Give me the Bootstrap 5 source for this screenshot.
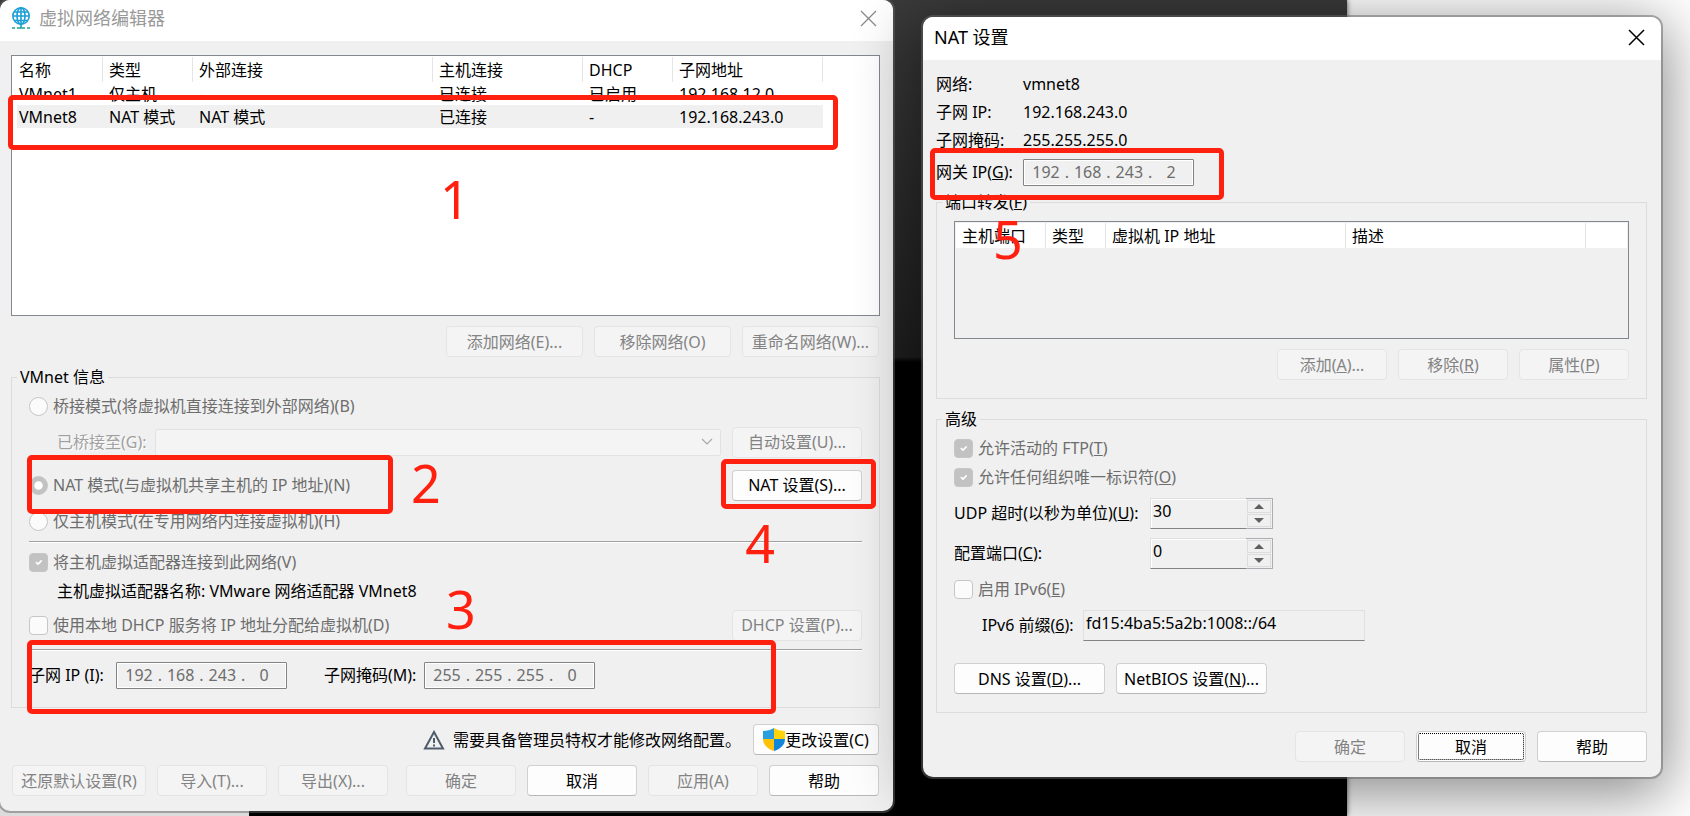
<!DOCTYPE html>
<html lang="zh-CN">
<head>
<meta charset="utf-8">
<meta name="viewport" content="width=device-width, initial-scale=1">
<title>虚拟网络编辑器</title>
<link href="https://cdn.jsdelivr.net/npm/bootstrap@5.3.0/dist/css/bootstrap.min.css" rel="stylesheet">
<style>
  body { font: 16px/24px "Noto Sans", "Noto Sans CJK SC", sans-serif; color: #000; background: #fff; }
  .desktop { display: grid; grid-template-columns: 893fr 30fr 738fr 29fr; align-items: start; min-height: 100vh; overflow: hidden; }
  .wallpaper { inset: 0 20.3% 0 0; background: linear-gradient(to right, #dcdcdc 249px, transparent 249px) bottom / 100% 30px no-repeat, linear-gradient(#3a3a3a, #1e1e1e 357px, #000 362px); box-shadow: 0 0 5px #555; }

  /* Windows */
  .win { background: #f0f0f0; border-radius: 10px; min-width: 0; position: relative; box-shadow: 0 0 0 2px rgba(100,100,100,.5); }
  .win-nat { grid-column: 3; margin-top: 17px; box-shadow: 0 0 0 2px rgba(100,100,100,.5), 0 12px 60px 6px rgba(0,0,0,.46); }
  .win-title { background: #fff; border-radius: 10px 10px 0 0; font-size: 18px; }
  .win-title h1 { font-size: 18px; line-height: 24px; font-weight: 400; margin: 0; }
  .win-close { border: 0; background: none; padding: 0; line-height: 0; }
  .win-editor .win-title { height: 41px; padding: 0 16px 5px 11px; color: #999; }
  .win-nat .win-title { height: 43px; padding: 0 16px 3px 11px; }
  .win-editor .win-body { padding: 14px 13px 15px 11px; }
  .win-nat .win-body { padding: 10px 14px 15px 13px; }

  /* Lists */
  .listbox { border: 1px solid #828790; background: #fff; padding: 1px; position: relative; }
  .listbox-main { height: 261px; }
  .listbox-ports { height: 118px; background: #f0f0f0; margin-top: 7px; }
  .listbox table { table-layout: fixed; width: 100%; border-collapse: separate; border-spacing: 0; }
  .listbox th { font-weight: 400; height: 25px; padding: 0 6px; border-right: 1px solid #e5e5e5; background: #fff; white-space: nowrap; }
  .listbox th:last-child { border-right: 0; }
  .listbox td { height: 23px; line-height: 22px; padding: 1px 6px 0; white-space: nowrap; }
  .listbox tr.chosen td { background: #f0f0f0; }
  .listbox tr.chosen td:first-child { box-shadow: inset 4px 0 #fff; }
  .listbox tr.chosen td:last-child { background: #fff; }
  .col-s { width: 90px; } .col-xs { width: 60px; } .col-m { width: 150px; } .col-l { width: 240px; }

  /* Buttons */
  .btn-win { font: inherit; line-height: 24px; height: 31px; min-width: 110px; padding: 0 6px; border: 1px solid #d0d0d0; border-bottom-color: #b8b8b8; border-radius: 4px; background: #fdfdfd; color: #000; white-space: nowrap; display: inline-flex; align-items: center; justify-content: center; }
  .btn-win:disabled { background: #f4f4f4; border-color: #e4e4e4; color: #838383; opacity: 1; }
  .btn-137 { width: 137px; } .btn-134 { width: 134px; } .btn-130 { width: 130px; } .btn-151 { width: 151px; } .btn-126 { width: 126px; }
  .btn-focus { outline: 1px dotted #000; outline-offset: -3px; }
  .gap-11 { gap: 11px; }
  .mt-10 { margin-top: 10px; }
  .mt-18 { margin-top: 18px; }
  .pb-18 { padding-bottom: 18px; }
  .px-17 { padding-left: 17px; padding-right: 17px; }
  .mx-1px { margin-left: 1px; margin-right: 1px; }
  .ms-37 { margin-left: 37px; }

  /* Group boxes */
  .group { border: 1px solid #dcdcdc; margin: 0; padding: 0; min-width: 0; }
  .group > legend { float: none; width: auto; font-size: 16px; line-height: 24px; margin: 0 0 0 5px; padding: 0 3px; }
  .line { display: flex; align-items: center; }
  .h-20 { min-height: 20px; line-height: 20px; } .h-24 { min-height: 24px; } .h-28 { min-height: 28px; } .h-32 { min-height: 32px; }
  .h-34 { min-height: 34px; } .h-36 { min-height: 36px; } .h-38 { min-height: 38px; } .h-40 { min-height: 40px; } .h-48 { min-height: 48px; }
  .rule { border-top: 1px solid #a0a0a0; border-bottom: 1px solid #fff; }
  .muted { color: #6d6d6d; }
  .etched { color: #a0a0a0; text-shadow: 1px 1px #fff; }

  .form-check-input.tick { width: 19px; height: 19px; margin: 0 5px 0 0; border: 1px solid #c6c6c6; background-color: #fbfbfb; opacity: 1; flex: none; }
  .form-check-input.tick[type=checkbox] { border-radius: 4px; }
  .form-check-input.tick:checked { background-color: #c2c2c2; background-size: 11px; }
  .form-check-input.tick[type=radio]:checked { background-size: 17px; }

  .combo { appearance: none; height: 27px; border: 1px solid #e2e2e2; border-radius: 2px; opacity: 1; min-width: 0;
    background: #f4f4f4 url("data:image/svg+xml,%3Csvg xmlns='http://www.w3.org/2000/svg' viewBox='0 0 12 8'%3E%3Cpath d='M1 1l5 5 5-5' fill='none' stroke='%23a8a8a8' stroke-width='1.2'/%3E%3C/svg%3E") no-repeat right 7px center / 12px 8px; }
  .ipbox { width: 171px; height: 27px; border: 1px solid #838383; box-shadow: inset 0 0 0 1px #fff; padding: 0 6px; color: #6d6d6d; flex: none; border-radius: 1px; }
  .ipbox input { width: 32px; border: 0; padding: 0; background: none; text-align: center; color: #6d6d6d; line-height: 22px; }
  .ipbox span { width: 10px; text-align: center; line-height: 22px; }
  .field { height: 31px; border: 1px solid #e0e0e0; border-bottom-color: #838383; background: #f0f0f0; padding: 0 2px 5px 2px; color: #000; min-width: 0; }
  .field-prefix { width: 282px; }
  .spin { width: 123px; flex: none; }
  .spin .field { flex: 1; border-right: 0; box-shadow: inset 1px 1px #fff; }
  .spin-keys { width: 27px; height: 31px; border: 1px solid #abadb3; border-left: 0; padding: 1px; display: grid; gap: 1px; }
  .spin-keys button { border: 1px solid #dcdcdc; background: #f0f0f0; padding: 0; line-height: 0; display: grid; place-items: center; }
  .lab-info { width: 87px; } .lab-num { width: 196px; } .lab-pre { width: 105px; } .lab-bridge { width: 98px; } .lab-mask { width: 100px; white-space: nowrap; }

  /* Hand-drawn notes over the windows */
  .note-box { position: absolute; border: 5px solid #ff2010; border-radius: 5px; z-index: 2; pointer-events: none; }
  .note-num { position: absolute; color: #ff2010; font-size: 52px; line-height: 52px; z-index: 2; pointer-events: none; }
  .nb1 { left: -4px; right: 41px; top: 39px; height: 55px; }
  .nn1 { left: 428px; top: 117px; }
  .nb2 { left: 15px; top: 66px; width: 366px; height: 59px; }
  .nn2 { left: 399px; top: 68px; }
  .nb3 { left: 15px; right: 103px; top: 251px; height: 74px; }
  .nn3 { left: 434px; top: 194px; }
  .nb4 { right: 3px; top: 70px; width: 155px; height: 50px; }
  .nn4 { right: 104px; top: 128px; }
  .nb5 { left: -6px; top: 78px; width: 294px; height: 52px; }
  .nn5 { left: 38px; top: -9px; }
</style>
</head>
<body>
<main class="desktop position-relative">
  <div class="wallpaper position-absolute"></div>

  <section class="win win-editor" aria-label="虚拟网络编辑器">
    <header class="win-title d-flex align-items-center">
      <svg class="me-2" width="20" height="24" viewBox="0 0 20 24" fill="none" stroke="#1b9fd8" stroke-width="1.6" aria-hidden="true">
        <circle cx="10" cy="10" r="8.2"/><ellipse cx="10" cy="10" rx="4" ry="8.2"/><path d="M10 2v20M3 6h14M2 10h16M3 14.500h14"/>
        <path d="M1 22h3M6 22h8M16 22h3" stroke="#1fa58c"/>
      </svg>
      <h1 class="flex-grow-1">虚拟网络编辑器</h1>
      <button class="win-close" type="button" aria-label="关闭"><svg width="17" height="17" viewBox="0 0 17 17" stroke="#8a8a8a" stroke-width="1.300"><path d="M1 1l15 15M16 1L1 16"/></svg></button>
    </header>
    <div class="win-body">
      <div class="listbox listbox-main">
        <table>
          <colgroup><col class="col-s"><col class="col-s"><col class="col-l"><col class="col-m"><col class="col-s"><col class="col-m"><col></colgroup>
          <thead><tr><th>名称</th><th>类型</th><th>外部连接</th><th>主机连接</th><th>DHCP</th><th>子网地址</th><th></th></tr></thead>
          <tbody>
            <tr><td>VMnet1</td><td>仅主机</td><td>-</td><td>已连接</td><td>已启用</td><td>192.168.12.0</td><td></td></tr>
            <tr class="chosen"><td>VMnet8</td><td>NAT 模式</td><td>NAT 模式</td><td>已连接</td><td>-</td><td>192.168.243.0</td><td></td></tr>
          </tbody>
        </table>
        <div class="note-box nb1"></div><div class="note-num nn1">1</div>
      </div>
      <div class="d-flex justify-content-end gap-11 mt-10 mb-2 mx-1px">
        <button class="btn-win btn-137" disabled>添加网络(E)...</button>
        <button class="btn-win btn-137" disabled>移除网络(O)</button>
        <button class="btn-win btn-137" disabled>重命名网络(W)...</button>
      </div>

      <fieldset class="group">
        <legend>VMnet 信息</legend>
        <div class="position-relative">
          <div class="px-17">
            <div class="line h-34"><input class="form-check-input tick" type="radio" name="mode" id="m1" disabled><label class="muted" for="m1">桥接模式(将虚拟机直接连接到外部网络)(B)</label></div>
            <div class="line h-38 gap-11 ps-4">
              <div class="d-flex align-items-center flex-grow-1 ps-1">
                <label class="etched lab-bridge flex-shrink-0" for="br">已桥接至(G):</label>
                <select class="combo flex-grow-1" id="br" disabled><option></option></select>
              </div>
              <button class="btn-win btn-130" disabled>自动设置(U)...</button>
            </div>
            <div class="line h-48">
              <input class="form-check-input tick" type="radio" name="mode" id="m2" checked disabled><label class="muted flex-grow-1" for="m2">NAT 模式(与虚拟机共享主机的 IP 地址)(N)</label>
              <button class="btn-win btn-130" type="button">NAT 设置(S)...</button>
            </div>
            <div class="line h-24"><input class="form-check-input tick" type="radio" name="mode" id="m3" disabled><label class="muted" for="m3">仅主机模式(在专用网络内连接虚拟机)(H)</label></div>
            <div class="rule mt-2"></div>
            <div class="line h-38"><input class="form-check-input tick" type="checkbox" id="c1" checked disabled><label class="muted" for="c1">将主机虚拟适配器连接到此网络(V)</label></div>
            <div class="line h-20 ps-4"><span class="ps-1">主机虚拟适配器名称: VMware 网络适配器 VMnet8</span></div>
            <div class="line h-48"><input class="form-check-input tick" type="checkbox" id="c2" disabled><label class="muted flex-grow-1" for="c2">使用本地 DHCP 服务将 IP 地址分配给虚拟机(D)</label>
              <button class="btn-win btn-130" disabled>DHCP 设置(P)...</button></div>
            <div class="rule"></div>
            <div class="line h-48 mb-2">
              <label class="lab-info" for="ip1">子网 IP (I):</label>
              <div class="ipbox d-flex align-items-center"><input id="ip1" value="192" disabled><span>.</span><input aria-label="子网 IP 第二段" value="168" disabled><span>.</span><input aria-label="子网 IP 第三段" value="243" disabled><span>.</span><input aria-label="子网 IP 第四段" value="0" disabled></div>
              <label class="ms-37 lab-mask" for="mk1">子网掩码(M):</label>
              <div class="ipbox d-flex align-items-center"><input id="mk1" value="255" disabled><span>.</span><input aria-label="子网掩码第二段" value="255" disabled><span>.</span><input aria-label="子网掩码第三段" value="255" disabled><span>.</span><input aria-label="子网掩码第四段" value="0" disabled></div>
            </div>
          </div>
          <div class="note-box nb2"></div><div class="note-num nn2">2</div>
          <div class="note-box nb3"></div><div class="note-num nn3">3</div>
          <div class="note-box nb4"></div><div class="note-num nn4">4</div>
        </div>
      </fieldset>

      <div class="d-flex justify-content-end align-items-center mt-3 mx-1px">
        <svg class="me-2" width="22" height="20" viewBox="0 0 22 20" fill="none" stroke="#4e5d6b" stroke-width="2" aria-hidden="true"><path d="M11 2L20 18.500H2z"/><path d="M11 8v5M11 14.500v2"/></svg>
        <span class="me-2 pe-1">需要具备管理员特权才能修改网络配置。</span>
        <button class="btn-win btn-126" type="button">
          <svg class="flex-shrink-0" width="22" height="23" viewBox="0 0 22 23" aria-hidden="true"><path d="M11 0C8 2 4 3 0 3v8h11z" fill="#2a9fe0"/><path d="M11 0c3 2 7 3 11 3v8H11z" fill="#ffd20a"/><path d="M0 11c0 6 5 10 11 12V11z" fill="#ffc20a"/><path d="M22 11c0 6-5 10-11 12V11z" fill="#0f86d8"/></svg>更改设置(C)</button>
      </div>
      <div class="d-flex gap-11 mt-10 mx-1px">
        <button class="btn-win btn-134" disabled>还原默认设置(R)</button>
        <button class="btn-win" disabled>导入(T)...</button>
        <button class="btn-win" disabled>导出(X)...</button>
        <button class="btn-win ms-auto" disabled>确定</button>
        <button class="btn-win" type="button">取消</button>
        <button class="btn-win" disabled>应用(A)</button>
        <button class="btn-win" type="button">帮助</button>
      </div>
    </div>
  </section>

  <section class="win win-nat" aria-label="NAT 设置">
    <header class="win-title d-flex align-items-center">
      <h1 class="flex-grow-1">NAT 设置</h1>
      <button class="win-close" type="button" aria-label="关闭"><svg width="17" height="17" viewBox="0 0 17 17" stroke="#000" stroke-width="1.500"><path d="M1 1l15 15M16 1L1 16"/></svg></button>
    </header>
    <div class="win-body">
      <div class="position-relative">
        <div class="line h-28"><span class="lab-info">网络:</span><span>vmnet8</span></div>
        <div class="line h-28"><span class="lab-info">子网 IP:</span><span>192.168.243.0</span></div>
        <div class="line h-28"><span class="lab-info">子网掩码:</span><span>255.255.255.0</span></div>
        <div class="line h-36"><label class="lab-info" for="gw1">网关 IP(<u>G</u>):</label>
          <div class="ipbox d-flex align-items-center"><input id="gw1" value="192" disabled><span>.</span><input aria-label="网关第二段" value="168" disabled><span>.</span><input aria-label="网关第三段" value="243" disabled><span>.</span><input aria-label="网关第四段" value="2" disabled></div>
        </div>
        <div class="note-box nb5"></div>
      </div>

      <fieldset class="group">
        <legend>端口转发(<u>F</u>)</legend>
        <div class="px-17 pb-18">
          <div class="listbox listbox-ports">
            <table>
              <colgroup><col class="col-s"><col class="col-xs"><col class="col-l"><col class="col-l"><col></colgroup>
              <thead><tr><th>主机端口</th><th>类型</th><th>虚拟机 IP 地址</th><th>描述</th><th></th></tr></thead>
            </table>
            <div class="note-num nn5">5</div>
          </div>
          <div class="d-flex justify-content-end gap-11 mt-10">
            <button class="btn-win" disabled>添加(<u>A</u>)...</button>
            <button class="btn-win" disabled>移除(<u>R</u>)</button>
            <button class="btn-win" disabled>属性(<u>P</u>)</button>
          </div>
        </div>
      </fieldset>

      <fieldset class="group mt-2">
        <legend>高级</legend>
        <div class="px-17 pb-18">
          <div class="line h-34"><input class="form-check-input tick" type="checkbox" id="c3" checked disabled><label class="muted" for="c3">允许活动的 FTP(<u>T</u>)</label></div>
          <div class="line h-24"><input class="form-check-input tick" type="checkbox" id="c4" checked disabled><label class="muted" for="c4">允许任何组织唯一标识符(<u>O</u>)</label></div>
          <div class="line h-40 mt-1"><label class="lab-num" for="udp">UDP 超时(以秒为单位)(<u>U</u>):</label>
            <div class="spin d-flex"><input class="field" id="udp" value="30" readonly><div class="spin-keys"><button type="button" aria-label="增加"><svg width="10" height="5"><path d="M0 5l5-5 5 5z" fill="#606060"/></svg></button><button type="button" aria-label="减少"><svg width="10" height="5"><path d="M0 0h10L5 5z" fill="#606060"/></svg></button></div></div></div>
          <div class="line h-40"><label class="lab-num" for="cfg">配置端口(<u>C</u>):</label>
            <div class="spin d-flex"><input class="field" id="cfg" value="0" readonly><div class="spin-keys"><button type="button" aria-label="增加"><svg width="10" height="5"><path d="M0 5l5-5 5 5z" fill="#606060"/></svg></button><button type="button" aria-label="减少"><svg width="10" height="5"><path d="M0 0h10L5 5z" fill="#606060"/></svg></button></div></div></div>
          <div class="line h-32"><input class="form-check-input tick" type="checkbox" id="c5" disabled><label class="muted" for="c5">启用 IPv6(<u>E</u>)</label></div>
          <div class="line h-40 ps-4"><label class="lab-pre ps-1" for="pre">IPv6 前缀(<u>6</u>):</label><input class="field field-prefix" id="pre" value="fd15:4ba5:5a2b:1008::/64" readonly></div>
          <div class="d-flex gap-11 mt-18">
            <button class="btn-win btn-151" type="button">DNS 设置(<u>D</u>)...</button>
            <button class="btn-win btn-151" type="button">NetBIOS 设置(<u>N</u>)...</button>
          </div>
        </div>
      </fieldset>

      <div class="d-flex justify-content-end gap-11 mt-18">
        <button class="btn-win" disabled>确定</button>
        <button class="btn-win btn-focus" type="button">取消</button>
        <button class="btn-win" type="button">帮助</button>
      </div>
    </div>
  </section>
</main>
<script src="https://cdn.jsdelivr.net/npm/bootstrap@5.3.0/dist/js/bootstrap.bundle.min.js"></script>
</body>
</html>
